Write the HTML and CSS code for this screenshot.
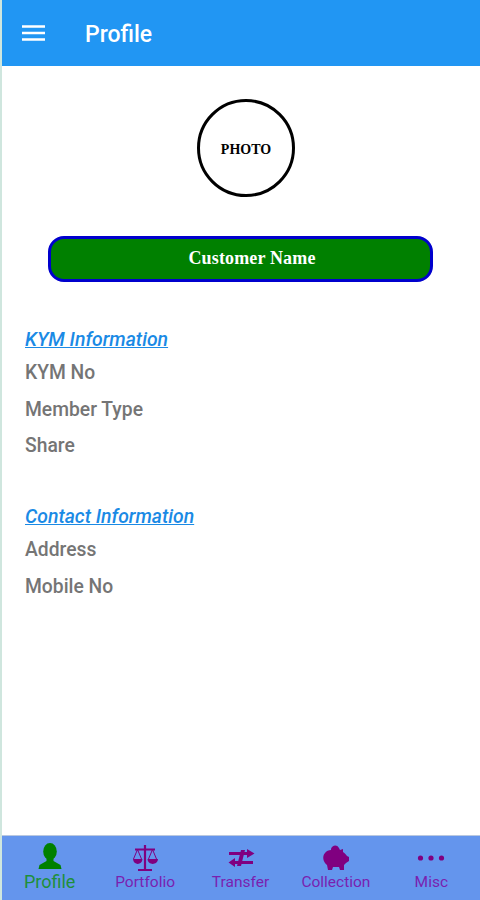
FILE: index.html
```html
<!DOCTYPE html>
<html lang="en">
<head>
    <meta charset="UTF-8">
    <meta name="viewport" content="width=device-width, initial-scale=1.0">
    <title>Profile</title>
    <link rel="stylesheet" href="styles.css">
</head>
<body>
    <div class="app">
        <header class="topbar">
            <svg class="menu-icon" width="24" height="18" viewBox="0 0 24 18">
                <path d="M0 2.500h23M0 9h23M0 15.500h23" stroke="#fff" stroke-width="2.400" fill="none"/>
            </svg>
            <span class="topbar-title">Profile</span>
        </header>

        <main class="content">
            <div class="photo">PHOTO</div>
            <div class="customer-name">Customer Name</div>

            <section class="info first">
                <h2 class="info-title">KYM Information</h2>
                <p class="info-row">KYM No</p>
                <p class="info-row">Member Type</p>
                <p class="info-row">Share</p>
            </section>

            <section class="info">
                <h2 class="info-title">Contact Information</h2>
                <p class="info-row">Address</p>
                <p class="info-row">Mobile No</p>
            </section>
        </main>

        <nav class="tabs">
            <div class="tab active">
                <svg width="26" height="28" viewBox="0 0 26 28">
                    <ellipse cx="13" cy="8.500" rx="6.800" ry="8.500" fill="#008000"/>
                    <path d="M9.500 14h7v4l7 4 1 4H1.500l1-4 7-4z" fill="#008000"/>
                </svg>
                <span>Profile</span>
            </div>
            <div class="tab">
                <svg width="30" height="28" viewBox="0 0 30 28">
                    <path d="M15 2v24M8 27h14M5 6.500h20" stroke="#800080" stroke-width="2.200" fill="none"/>
                    <path d="M7.500 6.500L3.500 16M7.500 6.500l4 9.500M22.500 6.500l-4 9.500M22.500 6.500l4 9.500" stroke="#800080" stroke-width="1" fill="none"/>
                    <path d="M3 16h9.500c-.5 6.500-9 6.500-9.500 0zM17.500 16H28c-.5 6.500-10 6.500-10.500 0z" fill="#800080"/>
                </svg>
                <span>Portfolio</span>
            </div>
            <div class="tab">
                <svg width="28" height="28" viewBox="0 0 28 28">
                    <path d="M2 9h19v3H2zM7 18h19v3H7z" fill="#800080"/>
                    <path d="M20 6l7.500 4.500L20 15zM8 15l-6.500 4.500L8 24z" fill="#800080"/>
                    <path d="M14 7h4l-4 16h-4z" fill="#800080"/>
                </svg>
                <span>Transfer</span>
            </div>
            <div class="tab">
                <svg width="28" height="28" viewBox="0 0 28 28">
                    <path d="M9 6c1-4 6-5 8-1l1 2 3-1v3c2 1 3 3 4 4l2 1v4l-3 2-2 2v5h-4l-1-3h-6l-1 3H6l-1-5c-4-3-5-9-2-12 1-2 4-3 6-3z" fill="#800080"/>
                </svg>
                <span>Collection</span>
            </div>
            <div class="tab">
                <svg width="28" height="28" viewBox="0 0 28 28">
                    <circle cx="3.500" cy="15" r="2.600" fill="#800080"/>
                    <circle cx="14" cy="15" r="2.600" fill="#800080"/>
                    <circle cx="24.500" cy="15" r="2.600" fill="#800080"/>
                </svg>
                <span>Misc</span>
            </div>
        </nav>
    </div>
</body>
</html>
```

FILE: styles.css
```css
* {
    box-sizing: border-box;
}
body {
    margin: 0;
    font-family: Roboto, sans-serif;
    background-color: #fff;
}
.app {
    display: flex;
    flex-direction: column;
    height: 900px;
    border-left: 2px solid #cfe6de;
}
.topbar {
    display: flex;
    align-items: center;
    flex-shrink: 0;
    height: 66px;
    padding-left: 20px;
    background-color: #2196f3;
    color: #fff;
}
.menu-icon {
    margin-right: 39px;
    margin-top: -1px;
}
.topbar-title {
    font-size: 23px;
    font-weight: 500;
    margin-top: 3px;
}
.content {
    flex: 1;
    display: flex;
    flex-direction: column;
    padding-top: 33px;
}
.photo {
    display: flex;
    align-items: center;
    justify-content: center;
    align-self: center;
    width: 98px;
    height: 98px;
    margin-left: 10px;
    padding-top: 3px;
    border: 3px solid #000;
    border-radius: 50%;
    font-family: "Liberation Serif", serif;
    font-size: 14px;
    font-weight: bold;
    color: #000;
}
.customer-name {
    align-self: center;
    width: 385px;
    height: 46px;
    margin-top: 39px;
    margin-left: -1px;
    padding-left: 23px;
    border: 3px solid #0000cd;
    border-radius: 16px;
    background-color: #008000;
    color: #fff;
    font-family: "Liberation Serif", serif;
    font-size: 18px;
    font-weight: bold;
    letter-spacing: 0.15px;
    line-height: 38px;
    text-align: center;
}
.info {
    margin-top: 39px;
    padding-left: 23px;
}
.info.first {
    margin-top: 45px;
}
.info-title {
    margin: 0 0 2px;
    font-size: 19.400px;
    font-weight: 500;
    font-style: italic;
    line-height: 26px;
    color: #1a8ae5;
    text-decoration: underline;
    text-decoration-thickness: 1px;
}
.info-row {
    margin: 0;
    font-size: 19.300px;
    font-weight: 500;
    line-height: 36.700px;
    color: #757575;
}
.tabs {
    display: flex;
    flex-shrink: 0;
    height: 65px;
    padding-right: 1px;
    background-color: #6495ed;
    border-top: 1px solid #b9c8e0;
}
.tab {
    flex: 1;
    display: flex;
    flex-direction: column;
    align-items: center;
    padding-top: 7px;
    color: #7a1fb0;
    font-size: 15.500px;
}
.tab svg {
    display: block;
}
.tab span {
    margin-top: 2px;
    line-height: 18px;
}
.tab.active {
    color: #1f8f3a;
    font-size: 18px;
}
.tab.active span {
    margin-top: 1px;
    line-height: 20px;
}
```
